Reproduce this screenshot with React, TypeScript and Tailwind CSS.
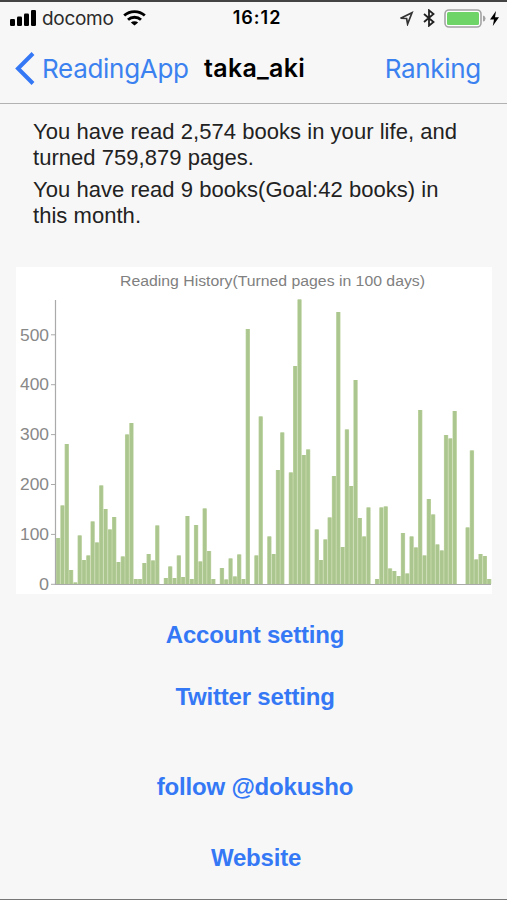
import { FC } from "react";

const pages = [
  92, 157, 280, 28, 3, 97, 48, 57, 125, 83, 197, 150, 109, 134, 44, 55, 299,
  322, 10, 10, 42, 60, 47, 117, 0, 12, 35, 12, 57, 14, 136, 10, 118, 45, 151,
  66, 10, 0, 32, 9, 51, 15, 59, 10, 510, 0, 57, 335, 0, 95, 60, 228, 303, 0,
  223, 436, 569, 258, 269, 0, 109, 48, 89, 133, 216, 544, 74, 309, 196, 408,
  132, 95, 153, 0, 10, 153, 155, 31, 26, 16, 102, 21, 95, 73, 348, 57, 170,
  139, 79, 67, 298, 291, 346, 0, 0, 113, 267, 49, 60, 56, 10,
];

const ticks = [0, 100, 200, 300, 400, 500];

const StatusBar: FC = () => (
  <div className="flex items-center h-[31px] pt-px pl-2.5 pr-2 text-black">
    <div className="flex flex-1 items-center">
      <svg width="27" height="16" viewBox="0 0 27 16">
        <rect x="0" y="9" width="5" height="7" rx="1.2" />
        <rect x="7" y="6.5" width="5" height="9.5" rx="1.2" />
        <rect x="14" y="3.5" width="5" height="12.5" rx="1.2" />
        <rect x="21" y="0" width="5" height="16" rx="1.2" />
      </svg>
      <span className="ml-[5px] w-[72px] text-[19px] leading-none tracking-[-0.3px] text-[#2b2b2b] whitespace-nowrap">
        docomo
      </span>
      <svg
        className="ml-[9px]"
        width="23"
        height="16"
        viewBox="0 0 23 16"
        fill="none"
        stroke="#000"
        strokeWidth="2.8"
      >
        <path d="M1.2 5.6C7 .2 16 .2 21.8 5.6" />
        <path d="M5 9.8C8.6 6.4 14.4 6.4 18 9.8" />
        <path d="M11.5 15.6L7.8 12.4C10 10.8 13 10.8 15.2 12.4Z" fill="#000" stroke="none" />
      </svg>
    </div>
    <span className="ml-[3px] mr-[-2px] text-[18px] font-semibold leading-none tracking-[1px]">
      16:12
    </span>
    <div className="flex flex-1 items-center justify-end">
      <svg width="15" height="15" viewBox="0 0 15 15" fill="none" stroke="#333" strokeWidth="1.7">
        <path d="M1.6 7.2L13 1.8L8.6 13L7.6 7.5Z" />
      </svg>
      <svg
        className="ml-[9px]"
        width="12"
        height="18"
        viewBox="0 0 12 18"
        fill="none"
        stroke="#222"
        strokeWidth="1.8"
      >
        <path d="M1 5L10.5 13L6 16.7V1.3L10.5 5L1 13" />
      </svg>
      <svg className="ml-[9px]" width="42" height="19" viewBox="0 0 42 19">
        <rect x="1" y="1" width="36" height="17" rx="4" fill="#fff" stroke="#a3a3a3" strokeWidth="1.6" />
        <rect x="3" y="3" width="32" height="13" rx="1.5" fill="#6fd468" />
        <path d="M39 6.5Q41.5 7 41.5 9.5T39 12.5Z" fill="#a3a3a3" />
      </svg>
      <svg className="ml-[4px]" width="9" height="15" viewBox="0 0 9 15">
        <path d="M6 0L0 8.5H4L2.8 15L9 6.3H5Z" />
      </svg>
    </div>
  </div>
);

const NavBar: FC = () => (
  <div className="flex items-center h-[71px] pt-px pl-[15px] pr-[26px] border-b border-[#b2b2b2] text-[26px] text-[#3b82f0] whitespace-nowrap">
    <svg width="20" height="33" viewBox="0 0 20 33" fill="none" stroke="#3478f6" strokeWidth="4">
      <path d="M18 1.5L3 16.5L18 31.5" />
    </svg>
    <span className="ml-[7px] w-[147px] tracking-[-0.3px]">ReadingApp</span>
    <h1 className="ml-[15px] text-[25px] font-semibold tracking-[0.3px] text-black">taka_aki</h1>
    <span className="ml-auto tracking-[-0.3px]">Ranking</span>
  </div>
);

const History: FC = () => (
  <svg
    className="ml-4 mt-[38px] bg-white"
    width="476"
    height="327"
    viewBox="16 267 476 327"
    fontFamily="Liberation Sans, Arial, sans-serif"
  >
    <text x="120" y="286" fontSize="14" fill="#808080" textLength="305" lengthAdjust="spacingAndGlyphs">
      Reading History(Turned pages in 100 days)
    </text>
    {ticks.map((tick) => (
      <g key={tick}>
        <text
          x="49"
          y={590 - tick * 0.499}
          fontSize="16"
          fill="#888"
          textAnchor="end"
          textLength={tick ? 29 : 10}
          lengthAdjust="spacingAndGlyphs"
        >
          {tick}
        </text>
        <path d={`M51 ${584.3 - tick * 0.499}h4.5`} stroke="#aaa" />
      </g>
    ))}
    {pages.map((count, i) => (
      <g key={i}>
        <rect x={56 + i * 4.31} y={584 - count / 2} width="4.31" height={count / 2} fill="#c0d5a4" />
        <rect x={56.6 + i * 4.31} y={584 - count / 2} width="3.1" height={count / 2} fill="#abc68e" />
      </g>
    ))}
    <path d="M55.5 300V584.5H491" fill="none" stroke="#aaa" strokeWidth="1.2" />
  </svg>
);

const App: FC = () => {
  return (
    <div className="flex flex-col w-[507px] h-[900px] overflow-hidden bg-[#f7f7f7] border-t-2 border-t-[#444] border-b border-b-[#777] font-['Inter',sans-serif]">
      <StatusBar />
      <NavBar />
      <main className="font-['Liberation_Sans',Arial,sans-serif]">
        <div className="h-[125px] pt-[15px] pl-[33px] text-[22px] leading-[25.5px] tracking-[0.04px] text-[#222] whitespace-nowrap">
          <p>
            You have read 2,574 books in your life, and
            <br />
            turned 759,879 pages.
          </p>
          <p className="mt-[7px]">
            You have read 9 books(Goal:42 books) in
            <br />
            this month.
          </p>
        </div>
        <History />
        <nav className="flex flex-col items-center pl-[3px] text-[24px] leading-7 font-bold tracking-[-0.2px] text-[#3478f6]">
          <a className="mt-[27px]">Account setting</a>
          <a className="mt-[34px]">Twitter setting</a>
          <a className="mt-[62px]">follow @dokusho</a>
          <a className="mt-[43px] pl-[2px]">Website</a>
        </nav>
      </main>
    </div>
  );
};

export default App;
